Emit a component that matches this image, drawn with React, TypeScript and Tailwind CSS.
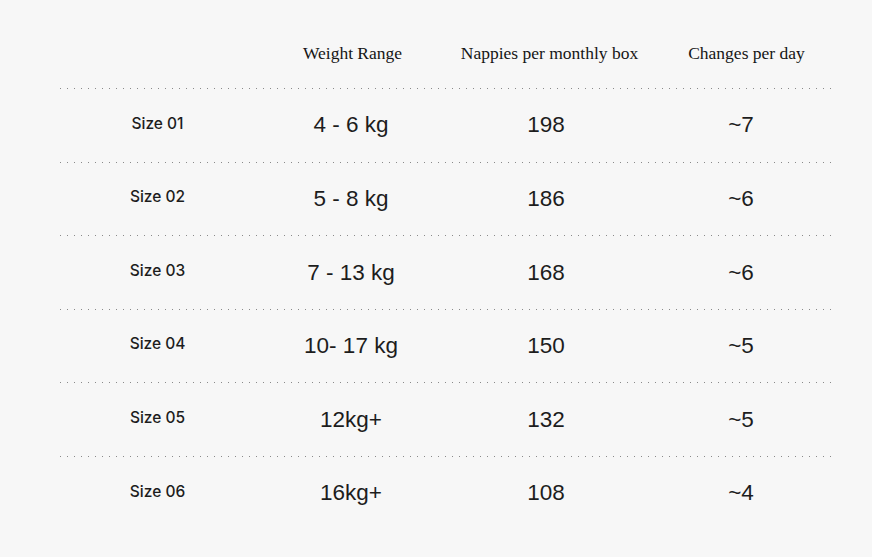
import React from "react";

const rows = [
  ["Size 01", "4 - 6 kg", "198", "~7"],
  ["Size 02", "5 - 8 kg", "186", "~6"],
  ["Size 03", "7 - 13 kg", "168", "~6"],
  ["Size 04", "10- 17 kg", "150", "~5"],
  ["Size 05", "12kg+", "132", "~5"],
  ["Size 06", "16kg+", "108", "~4"],
];

function Line() {
  return (
    <div className="h-px w-[772px] bg-[linear-gradient(to_right,#8a8a8a_1px,transparent_1px)] bg-[length:7px_1px] bg-repeat-x" />
  );
}

export default function App() {
  return (
    <div className="w-[872px] h-[557px] bg-[#f7f7f7] text-[#1d1d1d] overflow-hidden">
      <div className="ml-[60px] w-[772px]">
        <div className="grid grid-cols-[195px_195px_195px_187px] h-[88px] pt-[42px] font-['Liberation_Serif',serif] text-[17.5px] leading-[22px] text-[#151515]">
          <div />
          <div className="text-center">Weight Range</div>
          <div className="text-center translate-x-[2px]">Nappies per monthly box</div>
          <div className="text-center w-[195px] translate-x-[4px]">Changes per day</div>
        </div>
        {rows.map((r, i) => (
          <div key={i}>
            <Line />
            <div className="grid grid-cols-[195px_195px_195px_187px] h-[72.6px] items-center">
              <div className="text-center font-['Inter',sans-serif] text-[15.5px] font-medium pb-[4px]">
                {r[0]}
              </div>
              <div className="text-center font-['Liberation_Sans',sans-serif] text-[22.5px] -translate-x-[1.5px]">{r[1]}</div>
              <div className="text-center font-['Liberation_Sans',sans-serif] text-[22.5px] -translate-x-[1.5px]">{r[2]}</div>
              <div className="text-center w-[195px] font-['Liberation_Sans',sans-serif] text-[22.5px] -translate-x-[1.5px]">{r[3]}</div>
            </div>
          </div>
        ))}
      </div>
    </div>
  );
}
